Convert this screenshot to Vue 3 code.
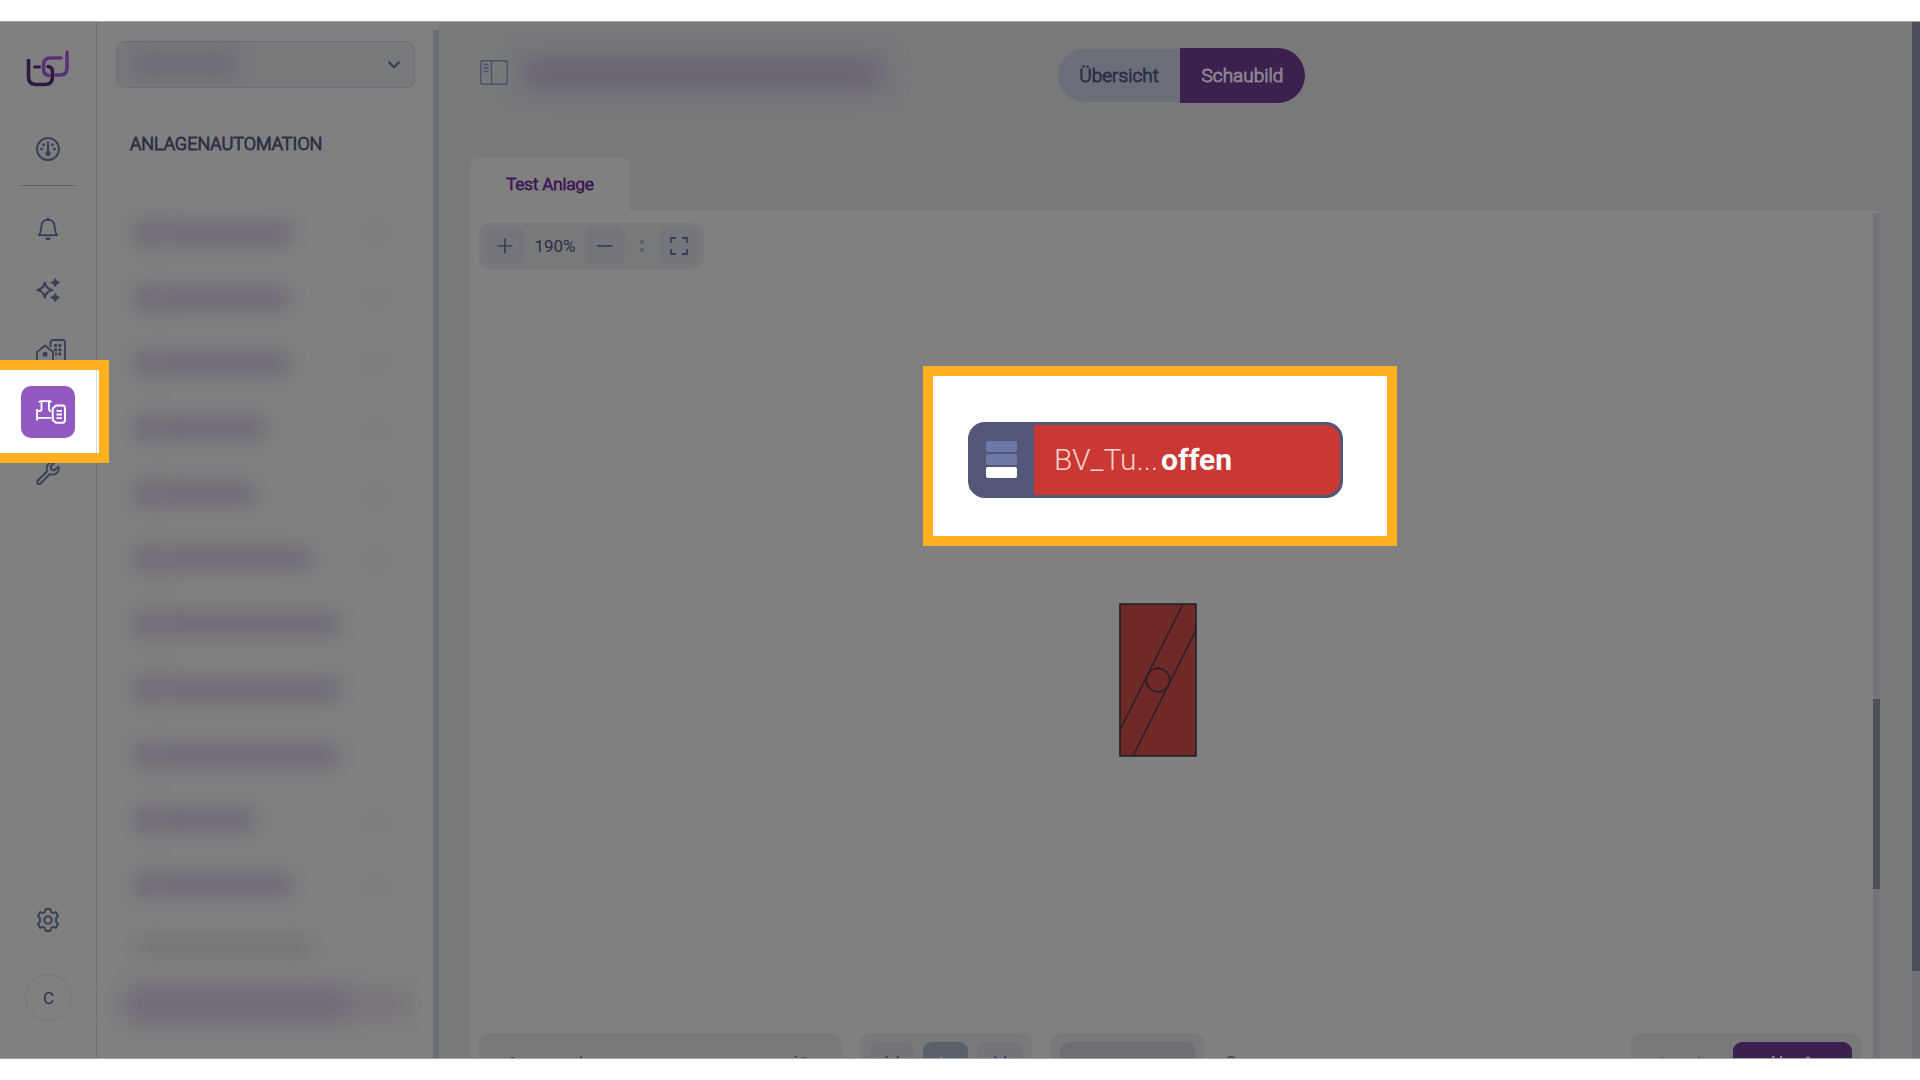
<script setup>
import { ref } from 'vue'

const plants = [
  { label: 132, badge: true },
  { label: 128, badge: true },
  { label: 128, badge: true },
  { label: 104, badge: true },
  { label: 94, badge: true },
  { label: 150, badge: true },
  { label: 180, badge: false },
  { label: 180, badge: false },
  { label: 178, badge: false },
  { label: 94, badge: true },
  { label: 132, badge: true },
]
const view = ref('Schaubild')
const zoom = ref(190)
</script>

<template>
  <div class="page">
    <div class="app">
      <nav class="rail" aria-label="Hauptnavigation">
        <a class="logo" href="#" aria-label="Startseite">
          <svg width="46" height="38" viewBox="0 0 46 38" fill="none" stroke-linecap="round" stroke-width="3.600">
            <path d="M36 9H25.500Q18.500 9 18.500 16V20Q18.500 26 24 26.500" stroke="#573278" />
            <path d="M42 3V19Q42 26 35 26H31" stroke="#573278" />
            <path d="M3.500 11.500V28Q3.500 35.500 11 35.500H20Q27.500 35.500 27.500 28V23Q27.500 18 23 17.500" stroke="#2f1a42" />
            <path d="M9.500 18H14.500" stroke="#2f1a42" stroke-width="2.800" />
          </svg>
        </a>
        <a class="item" href="#" aria-label="Dashboard">
          <svg width="24" height="24" viewBox="0 0 24 24" fill="none" stroke="#384058" stroke-width="1.900">
            <circle cx="12" cy="12" r="11" />
            <path d="M12 5.500V16" stroke-width="2.200" stroke-linecap="round" />
            <g fill="#384058" stroke="none">
              <circle cx="12" cy="16.500" r="2.600" />
              <circle cx="7.500" cy="7.700" r="1.500" /><circle cx="16.500" cy="7.700" r="1.500" />
              <circle cx="5.500" cy="12" r="1.500" /><circle cx="18.500" cy="12" r="1.500" />
            </g>
          </svg>
        </a>
        <hr class="rule" />
        <a class="item" href="#" aria-label="Meldungen">
          <svg width="24" height="24" viewBox="0 0 24 24" fill="none" stroke="#384058" stroke-width="1.900" stroke-linejoin="round">
            <path d="M3 18.200C5 15.500 5 13.500 5.300 9.500C5.700 5 8.500 2.800 12 2.800S18.300 5 18.700 9.500C19 13.500 19 15.500 21 18.200Z" />
            <path d="M12 1.300V2.500" stroke-linecap="round" />
            <path d="M9 20.800H15Q14.500 23.500 12 23.500T9 20.800Z" fill="#384058" stroke="none" />
          </svg>
        </a>
        <a class="item" href="#" aria-label="Assistent">
          <svg width="24" height="24" viewBox="0 0 24 24" fill="#384058">
            <path d="M8.800 4.500Q10 10.800 16.300 12Q10 13.300 8.800 19.500Q7.600 13.300 1.400 12Q7.600 10.800 8.800 4.500Z" fill="none" stroke="#384058" stroke-width="2.100" stroke-linejoin="round" />
            <path d="M19.300 0Q20.300 3.700 24 4.600Q20.300 5.700 19.300 9Q18.300 5.700 14.600 4.600Q18.300 3.700 19.300 0Z" stroke="#384058" stroke-width=".600" />
            <path d="M19.300 15Q20.300 18.700 24 19.400Q20.300 20.500 19.300 23.800Q18.300 20.500 14.600 19.400Q18.300 18.700 19.300 15Z" stroke="#384058" stroke-width=".600" />
          </svg>
        </a>
        <a class="item wide" href="#" aria-label="Gebäude">
          <svg width="30" height="24" viewBox="0 0 30 24" fill="none" stroke="#384058" stroke-width="1.800" stroke-linejoin="round">
            <path d="M17 23H1V13L9 6.500L17 13V23" />
            <path d="M14.500 8V3.500Q14.500 1 17 1H26.500Q29 1 29 3.500V23H17" />
            <g fill="#384058" stroke="none">
              <rect x="6.800" y="13" width="4.500" height="4.500" rx="1" />
              <rect x="18" y="5" width="3" height="3" rx=".600" /><rect x="22.300" y="5" width="3" height="3" rx=".600" />
              <rect x="18" y="9.300" width="3" height="3" rx=".600" /><rect x="22.300" y="9.300" width="3" height="3" rx=".600" />
              <rect x="19" y="13.600" width="2" height="3" rx=".600" /><rect x="22.300" y="13.600" width="3" height="3" rx=".600" />
            </g>
          </svg>
        </a>
        <div class="spot">
          <a class="item wide active" href="#" aria-label="Anlagenautomation" aria-current="page">
            <svg width="30" height="24" viewBox="0 0 30 24" fill="none" stroke="#fff" stroke-width="1.800">
              <path d="M3.500 1.200H15M5.500 1V9.500Q5.500 11 4 11H1M13 1V9.500Q13 11 15 11M1 9V20.500M1 17.800H15M3.500 1V2.500M14.800 1V2.500" />
              <path d="M20 5.500H26.500Q29 5.500 29 8V20Q29 22.800 26.500 22.800H20L16.700 20V8.500Z" stroke-width="2" stroke-linejoin="round" />
              <path d="M20.500 10.800H26M20.500 14.500H26M20.500 18.200H26" />
            </svg>
          </a>
        </div>
        <a class="item" href="#" aria-label="Wartung">
          <svg width="24" height="24" viewBox="0 0 24 24" fill="none" stroke="#384058" stroke-width="1.900" stroke-linejoin="round">
            <path d="M18.500 1.600C14 .300 10 3.500 10.800 8.500L11 10.500L2 19.300C-.200 21.600 2.600 24.500 5 22.200L13.500 13.300L15.500 13.600C20.500 14 23.800 10 22.500 5.500L18.500 9.300L15.500 8.500L14.700 5.500Z" />
            <circle cx="4" cy="20" r=".700" fill="#384058" stroke="none" />
          </svg>
        </a>
        <a class="item settings" href="#" aria-label="Einstellungen">
          <svg width="24" height="24" viewBox="0 0 24 24" fill="none" stroke="#384058" stroke-width="2" stroke-linejoin="round">
            <path d="M9.700 1H14.300L15 4L16.800 5L19.800 4.100L22 8L20 10.400V13.600L22 16L19.800 19.900L16.800 19L15 20L14.300 23H9.700L9 20L7.200 19L4.200 19.900L2 16L4 13.600V10.400L2 8L4.200 4.100L7.200 5L9 4Z" />
            <circle cx="12" cy="12" r="3.700" />
          </svg>
        </a>
        <button class="avatar" type="button">C</button>
      </nav>

      <aside class="sidebar">
        <div class="picker">
          <select aria-label="Standort"><option></option></select>
          <span class="haze picked"></span>
          <svg class="chevron" width="12" height="8" viewBox="0 0 12 8" fill="none" stroke="#384058" stroke-width="2.200" stroke-linecap="round" stroke-linejoin="round"><path d="M1.200 1.400L6 6.200L10.800 1.400" /></svg>
        </div>
        <h2>ANLAGENAUTOMATION</h2>
        <ul class="plants">
          <li v-for="(p, i) in plants" :key="i">
            <span class="haze dot"></span>
            <span class="haze label" :style="{ width: p.label + 'px' }"></span>
            <span v-if="p.badge" class="haze badge"></span>
          </li>
        </ul>
        <div class="haze group"></div>
        <div class="haze chosen"><span class="haze"></span></div>
      </aside>
      <div class="side-scroll"></div>

      <main>
        <header>
          <button class="fold" type="button" aria-label="Seitenleiste">
            <svg width="28" height="25" viewBox="0 0 28 25" fill="none" stroke="#4b5366" stroke-width="1.500">
              <rect x=".700" y=".700" width="26.600" height="23.600" rx="2.500" />
              <path d="M11.500 1V24M3.500 4.500H8.500M3.500 8H8.500M3.500 11.500H8.500" />
            </svg>
          </button>
          <span class="haze title"></span>
          <div class="views">
            <button type="button" :class="{ on: view === 'Übersicht' }" @click="view = 'Übersicht'">Übersicht</button>
            <button type="button" :class="{ on: view === 'Schaubild' }" @click="view = 'Schaubild'">Schaubild</button>
          </div>
        </header>

        <button class="tab" type="button">Test Anlage</button>
        <section class="panel">
          <div class="canvas">
            <div class="tools">
              <button type="button" aria-label="Vergrößern" @click="zoom += 10">
                <svg width="16" height="16" viewBox="0 0 16 16" stroke="#384058" stroke-width="1.700"><path d="M8 .500V15.500M.500 8H15.500" /></svg>
              </button>
              <output>{{ zoom }}%</output>
              <button type="button" aria-label="Verkleinern" @click="zoom -= 10">
                <svg width="16" height="16" viewBox="0 0 16 16" stroke="#384058" stroke-width="1.700"><path d="M.500 8H15.500" /></svg>
              </button>
              <span class="dots"><i></i><i></i></span>
              <button type="button" aria-label="Vollbild">
                <svg width="18" height="18" viewBox="0 0 18 18" fill="none" stroke="#384058" stroke-width="1.800"><path d="M1 6V1H6M12 1H17V6M17 12V17H12M6 17H1V12" /></svg>
              </button>
            </div>

            <div class="callout">
              <div class="chip">
                <span class="levels"><i></i><i></i><i></i></span>
                <span class="state"><span class="name">BV_Tu...</span><strong>offen</strong></span>
              </div>
            </div>

            <svg class="damper" width="78" height="154" viewBox="0 0 78 154" stroke="#201f2b" stroke-width="1.400">
              <rect x="1" y="1" width="76" height="152" fill="#6f2926" stroke-width="1.600" />
              <path d="M64 1L1 127M77 27L14 153" fill="none" />
              <circle cx="39" cy="77" r="11.700" fill="#6f2926" />
            </svg>

            <div class="dock">
              <div class="box field"><svg width="180" height="2" viewBox="0 0 180 2" fill="#43465d"><path d="M1 2Q3 0 6 2ZM71 0H73V2H71Z" /></svg><svg width="14" height="3" viewBox="0 0 14 3" fill="#43465d"><path d="M0 0H3V3H2V1H0ZM7 3Q7 1 10 1T14 3Z" /></svg></div>
              <div class="box player">
                <button type="button" aria-label="Zurück"><svg width="14" height="2" viewBox="0 0 14 2" fill="#43465d"><path d="M1 0H3V2H0ZM12 0H14V2H11Z" /></svg></button>
                <button class="play" type="button" aria-label="Abspielen"><svg width="14" height="3" viewBox="0 0 14 3" fill="#808080"><path d="M1 0L7 3H1Z" /></svg></button>
                <button type="button" aria-label="Vor"><svg width="14" height="2" viewBox="0 0 14 2" fill="#43465d"><path d="M1 0H3L4 2H1ZM11 0H13L14 2H11Z" /></svg></button>
              </div>
              <div class="box speed"><button type="button" aria-label="Geschwindigkeit"></button></div>
              <svg class="knob" width="10" height="3" viewBox="0 0 10 3" fill="#43465d"><path d="M0 3Q1 0 5 0T10 3Z" /></svg>
              <div class="box live">
                <svg width="40" height="2" viewBox="0 0 40 2" fill="#606371"><path d="M1 1H3V2H1ZM37 0H39V2H37Z" /></svg>
                <button type="button" aria-label="Live"><svg width="44" height="2" viewBox="0 0 44 2" fill="#8b828f"><path d="M1 0H4L3 2H1ZM9 0H11V2H9ZM34 2Q37 -1 40 2Z" /></svg></button>
              </div>
            </div>
          </div>
          <div class="panel-scroll"><i></i></div>
        </section>
      </main>
      <div class="page-scroll"><i></i></div>
    </div>
  </div>
</template>

<style>
body { margin: 0; background: #fff; overflow: hidden; }
</style>

<style scoped>
*, *::before { box-sizing: border-box; }
button { border: 0; padding: 0; margin: 0; background: none; font: inherit; color: inherit; }
svg { display: block; }
.page { height: 100vh; padding: 21px 0; background: #fff; font-family: Roboto, sans-serif; color: #2d3048; }
.app { display: flex; height: 100%; overflow: hidden; background: #808080; border-top: 1px solid #a5a5a5; border-bottom: 1px solid #a5a5a5; }

.rail { flex: none; width: 97px; display: flex; flex-direction: column; padding: 27px 21px 37px; border-right: 1px solid #69707b; }
.logo { margin: 0 4px 36px; }
.item { flex: none; display: flex; align-items: center; justify-content: center; width: 54px; height: 52px; margin-bottom: 9px; border-radius: 10px; }
.wide { padding-left: 6px; }
.rule { flex: none; width: 54px; height: 1px; margin: 1px 0 17px; border: 0; background: #5c5f70; }
.spot { position: relative; z-index: 3; height: 61px; }
.spot::before { content: ""; position: absolute; left: -21px; top: -26px; width: 109px; height: 103px; border: 10px solid #ffb020; border-left: 0; background: linear-gradient(90deg, #fff 96px, #d7daea 96px 97px, #fff 97px); }
.active { position: relative; background: #9159c1; }
.settings { margin-top: auto; margin-bottom: 28px; }
.avatar { width: 47px; height: 47px; margin-left: 4px; flex: none; border: 1px solid #74747c; border-radius: 50%; font-size: 17px; }

.sidebar { flex: none; width: 336px; display: flex; flex-direction: column; padding: 19px 19px 0; }
.picker { position: relative; }
select { display: block; width: 299px; height: 47px; appearance: none; border: 1px solid #6b7079; border-radius: 9px; background: #77797b; }
.chevron { position: absolute; right: 14px; top: 20px; }
.haze { display: block; filter: blur(10px); background: #6e6675; }
.picked { position: absolute; left: 16px; top: 11px; width: 104px; height: 24px; background: #6d6a74; }
h2 { margin: 44px 0 0 14px; font-size: 18px; line-height: 24px; font-weight: 300; }
h2, .views, .tab { -webkit-text-stroke: 1px currentColor; }
.plants { flex: none; list-style: none; margin: 44px 0 0; padding: 0; height: 718px; display: flex; flex-direction: column; }
.plants li { flex: 1; display: flex; align-items: center; padding-left: 18px; }
.dot { width: 26px; height: 26px; border-radius: 50%; }
.label { height: 20px; }
.badge { width: 32px; height: 32px; margin-left: auto; margin-right: 22px; border-radius: 50%; background: #7d7d7f; }
.group { flex: none; width: 180px; height: 16px; margin: 20px 0 0 18px; background: #6e7274; }
.chosen { flex: none; height: 38px; margin: 31px 4px 0 8px; padding: 8px 0 0 5px; background: #79757b; }
.chosen .haze { width: 214px; height: 22px; background: #6e6377; }
.side-scroll { flex: none; width: 6px; margin-top: 8px; border-radius: 3px 3px 0 0; background: #696b75; }

main { flex: 1; min-width: 0; display: flex; flex-direction: column; padding: 26px 32px 0 31px; background: #77797b; }
header { flex: none; display: flex; align-items: center; height: 55px; margin-bottom: 54px; }
.fold { margin: 0 16px 6px 10px; }
.title { width: 358px; height: 30px; margin-bottom: 6px; filter: blur(12px); background: #6a6172; }
.views { display: flex; align-items: center; margin-left: 176px; font-size: 19px; font-weight: 300; }
.views button { width: 122px; height: 53px; border-radius: 27px 0 0 27px; background: #6b6e78; }
.views button:last-child { width: 125px; border-radius: 0 28px 28px 0; }
.views .on, .views button.on { height: 55px; background: #3c204f; color: #8b848f; }
.tab { flex: none; width: 160px; height: 54px; border-radius: 9px 9px 0 0; background: #808080; color: #3e1c55; font-size: 17px; font-weight: 300; }
.panel { flex: 1; min-height: 0; display: flex; background: #808080; }
.canvas { flex: 1; min-width: 0; position: relative; padding: 12px 12px 0 9px; display: flex; flex-direction: column; justify-content: space-between; }
.tools { align-self: flex-start; display: flex; align-items: center; height: 46px; padding: 0 5px 0 6px; border-radius: 10px; background: #77797b; }
.tools button { display: flex; align-items: center; justify-content: center; width: 40px; height: 36px; border-radius: 9px; background: #73757a; }
output { width: 60px; text-align: center; font-size: 17px; }
.dots { width: 34px; display: flex; flex-direction: column; align-items: center; gap: 4px; }
.dots i { width: 4px; height: 4px; border-radius: 50%; background: #5c5f70; }
.callout { position: absolute; left: 453px; top: 155px; width: 474px; height: 180px; padding: 46px 35px; border: 10px solid #ffb020; background: #fff; }
.chip { display: flex; width: 375px; height: 76px; border: 3px solid #525779; border-radius: 17px; background: #525779; overflow: hidden; }
.levels { flex: none; width: 63px; display: flex; flex-direction: column; align-items: center; justify-content: center; gap: 2px; padding: 0 2px 2px 0; }
.levels i { width: 31px; height: 11px; border-radius: 2px; background: #6e78a4; }
.levels i:last-child { background: #fff; }
.state { flex: 1; display: flex; align-items: center; padding: 0 0 2px 20px; background: #c93832; border-radius: 0 14px 14px 0; color: #fff; font-size: 30px; white-space: nowrap; }
.name { width: 107px; font-weight: 300; color: #fad0d0; }
strong { font-weight: 700; }
.damper { position: absolute; left: 649px; top: 392px; }
.dock { display: flex; height: 25px; overflow: hidden; }
.box { height: 60px; flex: none; padding: 9px; border-radius: 10px; background: #77797b; }
.field { display: flex; justify-content: space-between; width: 363px; padding: 23px 34px 0 30px; }
.player { display: flex; gap: 9px; width: 172px; margin-left: 18px; }
.box button { display: flex; justify-content: center; align-items: flex-start; height: 42px; padding-top: 14px; border-radius: 9px; }
.player button { width: 45px; background: #737479; }
.player .play { background: #59626b; }
.speed { width: 153px; margin-left: 19px; }
.speed button { width: 135px; background: #6e6f75; }
.knob { margin: 23px 0 0 22px; }
.live { display: flex; justify-content: space-between; width: 230px; margin-left: auto; padding-left: 30px; }
.live > svg { margin-top: 14px; }
.live button { width: 119px; background: #3c204f; }
.panel-scroll { flex: none; width: 7px; margin-top: 2px; padding-top: 486px; background: #72747a; }
.panel-scroll i { display: block; height: 190px; background: #4a4f5a; }
.page-scroll { flex: none; width: 8px; background: #707278; }
.page-scroll i { display: block; height: 949px; background: #4a4f5a; }
</style>
